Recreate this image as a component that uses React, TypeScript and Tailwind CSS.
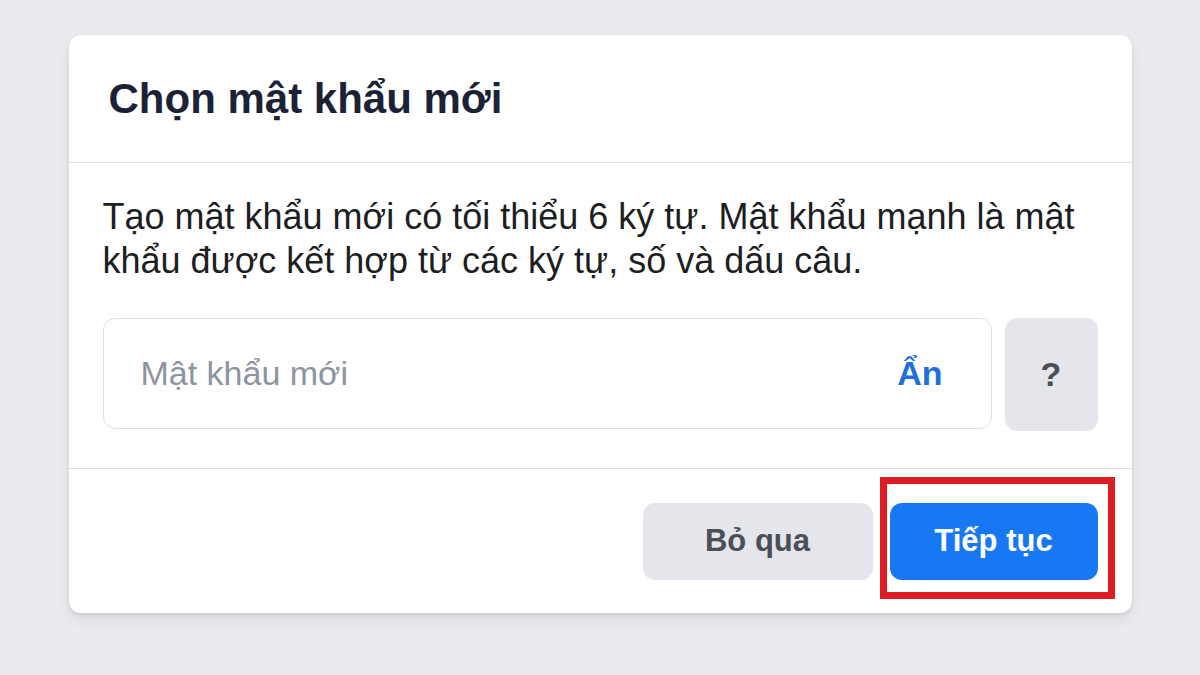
export default function App() {
  return (
    <div className="min-h-screen bg-[#e9ebee] pt-[35px] font-['Liberation_Sans',Arial,sans-serif]">
      <div className="mx-auto w-[1063px] rounded-[12px] bg-white shadow-[0_2px_4px_rgba(0,0,0,0.1),0_8px_16px_rgba(0,0,0,0.06)]">
        <div className="flex h-[128px] items-center border-b border-[#dddfe2] px-[40px]">
          <h2 className="text-[42px] font-bold text-[#1c2236]">Chọn mật khẩu mới</h2>
        </div>

        <div className="px-[34px] pt-[32px] pb-[37px]">
          <p className="text-[36px] leading-[44px] text-[#1c1e21]">
            Tạo mật khẩu mới có tối thiểu 6 ký tự. Mật khẩu mạnh là mật
            <br />
            khẩu được kết hợp từ các ký tự, số và dấu câu.
          </p>

          <div className="mt-[35px] flex gap-[13px]">
            <div className="flex h-[111px] flex-1 items-center justify-between rounded-[12px] border border-[#dddfe2] pl-[37px] pr-[48px]">
              <span className="text-[34px] text-[#8d949e]">Mật khẩu mới</span>
              <span className="text-[34px] font-bold text-[#216fdb]">Ẩn</span>
            </div>
            <button className="flex h-[113px] w-[93px] items-center justify-center rounded-[12px] bg-[#e4e6eb] text-[34px] font-bold text-[#4b4f56]">
              ?
            </button>
          </div>
        </div>

        <div className="flex h-[145px] items-center justify-end gap-[17px] border-t border-[#dddfe2] px-[34px]">
          <button className="h-[77px] w-[230px] rounded-[12px] bg-[#e4e6eb] text-[31px] font-bold text-[#4b4f56]">
            Bỏ qua
          </button>
          <div className="relative">
            <button className="h-[77px] w-[208px] rounded-[12px] bg-[#1877f2] text-[31px] font-bold text-white">
              Tiếp tục
            </button>
            <div className="absolute -top-[26px] -bottom-[19px] -left-[10px] -right-[17px] border-[7px] border-[#dd1c24]" />
          </div>
        </div>
      </div>
    </div>
  );
}
